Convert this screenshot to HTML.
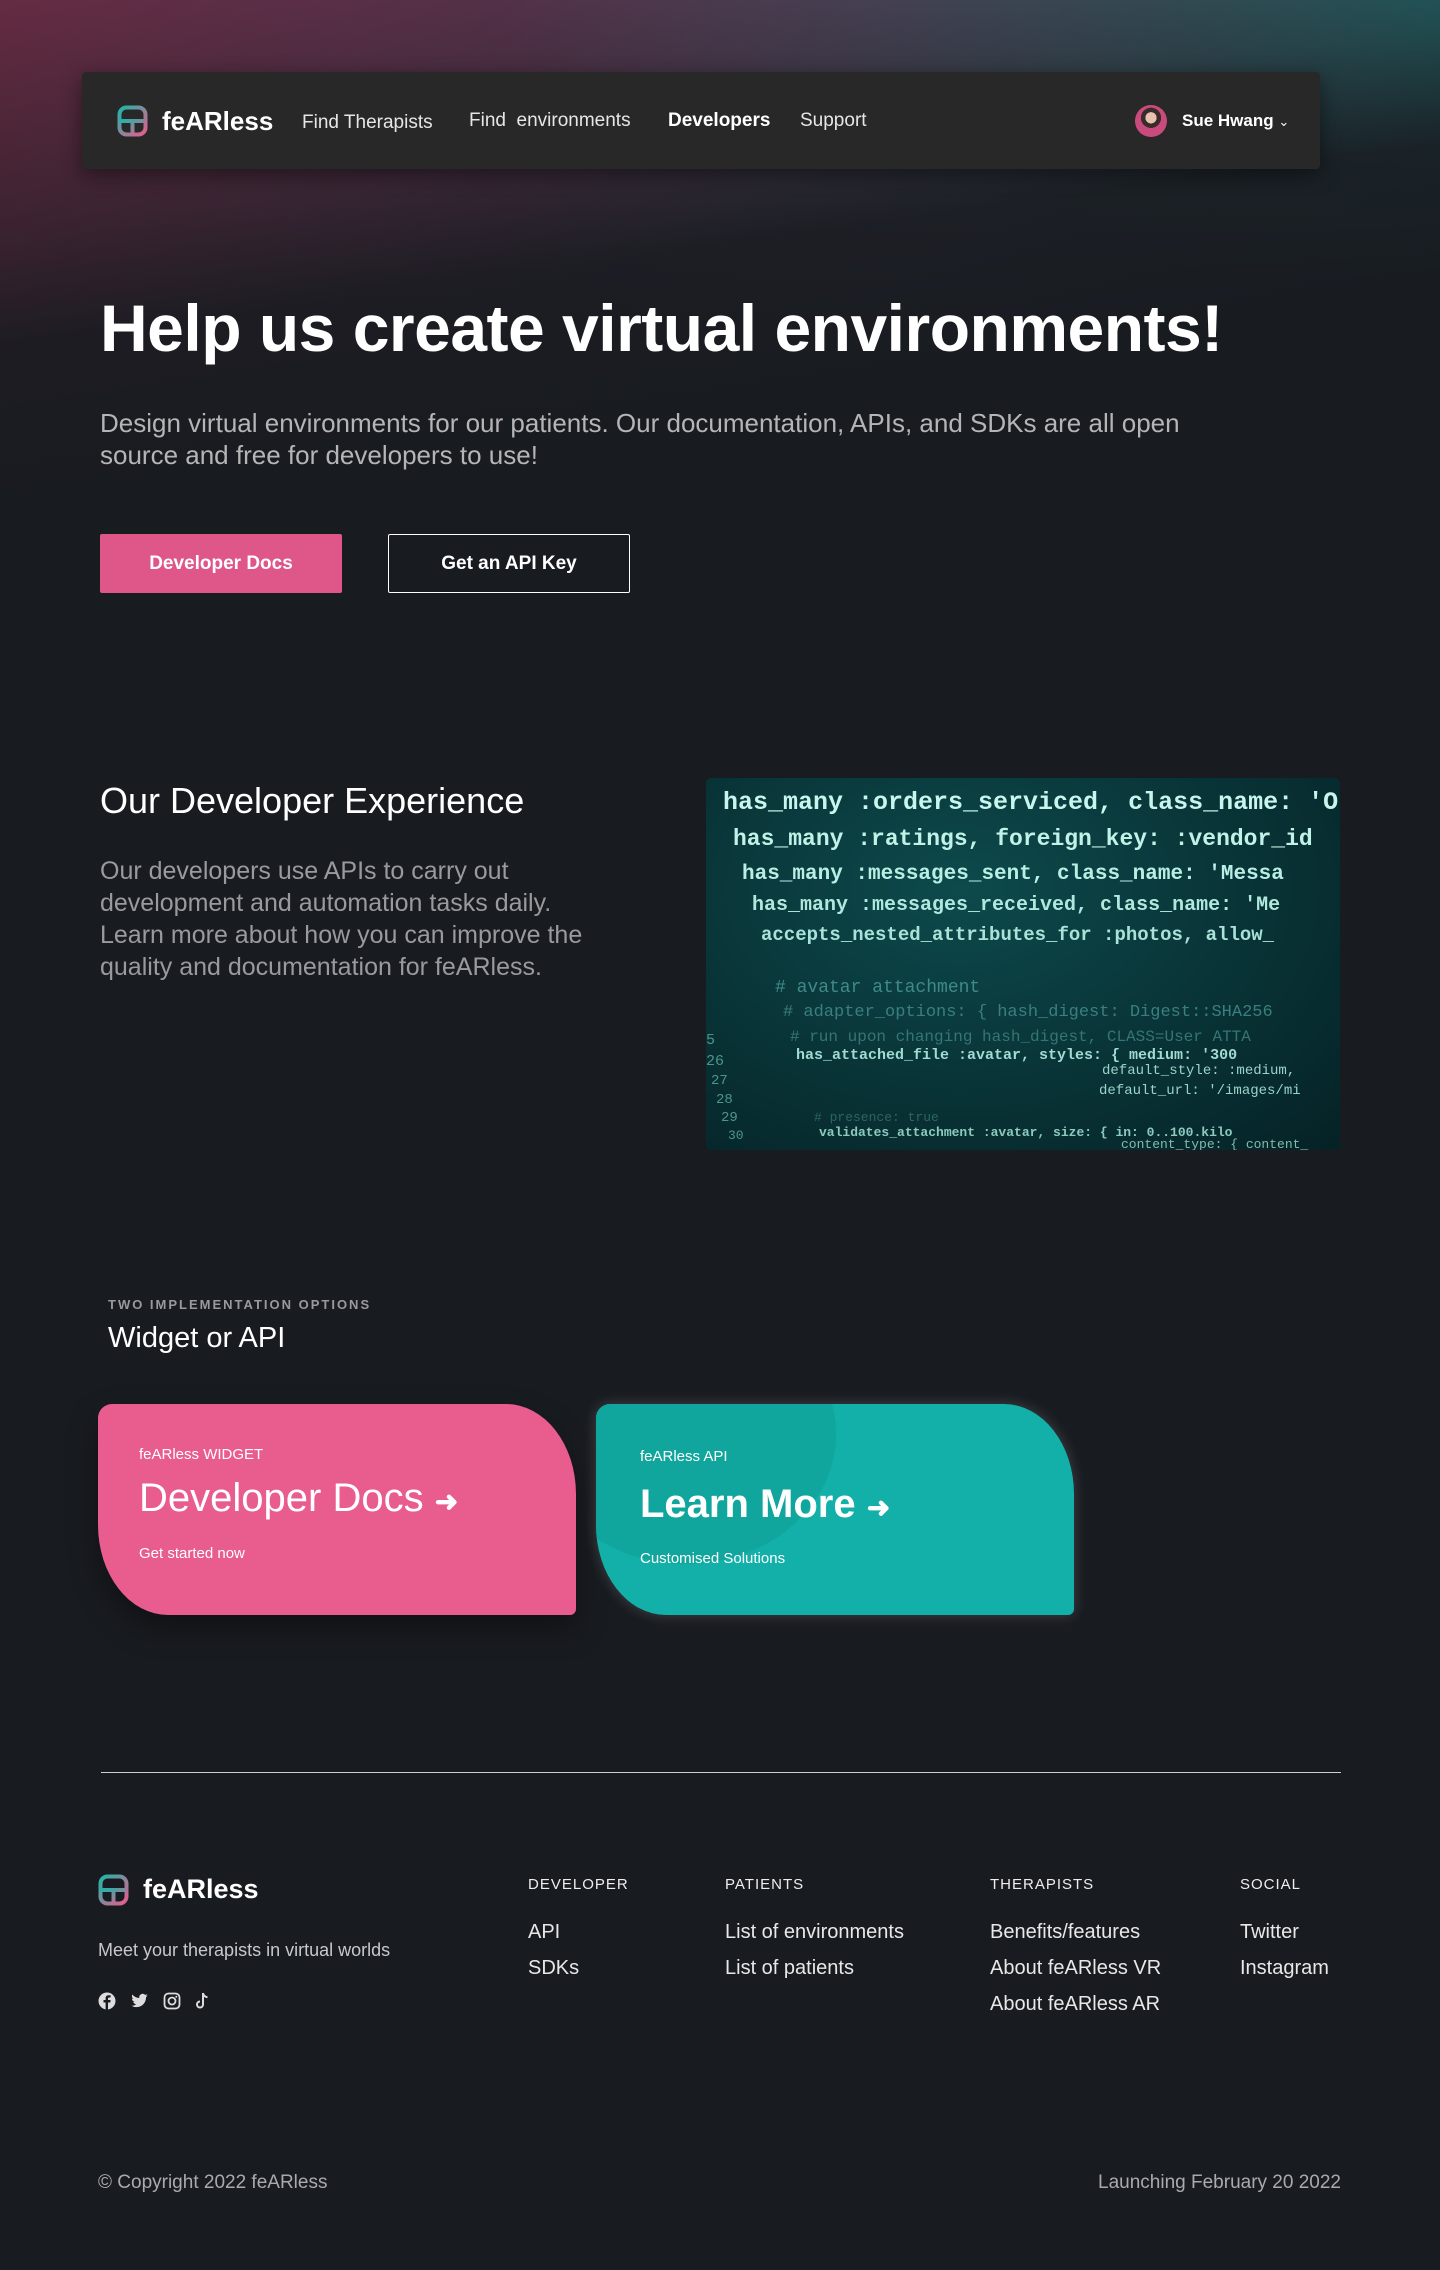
<!DOCTYPE html>
<html><head><meta charset="utf-8"><style>
*{margin:0;padding:0;box-sizing:border-box}
body{width:1440px;height:2270px;background:#181b20;font-family:"Liberation Sans",sans-serif;color:#fff;position:relative;overflow:hidden}
.abs{position:absolute}
.topbg{position:absolute;left:0;top:0;width:1440px;height:520px;
background:linear-gradient(to right,#652b43 0%,#5f3550 35%,#565066 62%,#3f6a74 85%,#2a8486 100%);}
.topbg:after{content:"";position:absolute;inset:0;background:linear-gradient(172deg,rgba(24,27,32,0) 0%,rgba(24,27,32,.55) 32%,rgba(24,27,32,.93) 48%,#181b20 70%)}
.nav{left:82px;top:72px;width:1238px;height:97px;background:#282828;border-radius:4px;box-shadow:0 6px 20px rgba(0,0,0,.45)}
.nav a{position:absolute;top:40px;font-size:19px;color:#e6e6e6;text-decoration:none}
.btn{top:534px;width:242px;height:59px;border-radius:2px;font-size:19px;font-weight:bold;display:flex;align-items:center;justify-content:center}
.code{left:706px;top:778px;width:634px;height:372px;border-radius:5px;overflow:hidden;background:radial-gradient(ellipse at 40% 30%,#0d4a4c 0%,#093538 50%,#052226 100%);font-family:"Liberation Mono","DejaVu Sans Mono",monospace;white-space:nowrap}
.code div{position:absolute;line-height:1}
.card{top:1404px;width:478px;height:211px;border-radius:14px 70px 6px 70px/14px 90px 6px 90px;overflow:hidden}
.card .s{position:absolute;font-size:15px}
.card .b{position:absolute;font-size:40px}
.fh{top:1876px;font-size:15px;letter-spacing:1px;color:#eee}
.fl{font-size:20px;color:#e8e8e8;line-height:36px}
</style></head><body>
<div class="topbg"></div>

<div class="abs nav">
  <svg class="abs" style="left:35px;top:33px" width="31" height="32" viewBox="0 0 31 32"><defs><linearGradient id="lg" x1="0" y1="0" x2="1" y2="1"><stop offset="0" stop-color="#1fb5a9"/><stop offset="1" stop-color="#e85c8e"/></linearGradient></defs><rect x="2.5" y="2.5" width="26" height="27" rx="7" fill="none" stroke="url(#lg)" stroke-width="4"/><path d="M3 16H28M15.5 16V29" stroke="url(#lg)" stroke-width="4" fill="none"/></svg>
  <div class="abs" style="left:80px;top:34px;font-size:26px;font-weight:bold">feARless</div>
  <a style="left:220px">Find Therapists</a>
  <a style="left:387px;top:38px">Find &nbsp;environments</a>
  <a style="left:586px;top:38px;color:#fff;font-weight:bold">Developers</a>
  <a style="left:718px;top:38px">Support</a>
  <div class="abs" style="left:1053px;top:33px;width:32px;height:32px;border-radius:50%;background:radial-gradient(circle at 50% 40%,#e8c0b0 0 22%,#3a2a2a 23% 40%,#c94b7e 41%)"></div>
  <div class="abs" style="left:1100px;top:39px;font-size:17px;font-weight:bold">Sue Hwang <span style="font-weight:normal;font-size:13px">&#8964;</span></div>
</div>

<div class="abs" style="left:100px;top:290px;font-size:66px;font-weight:bold;letter-spacing:-0.5px">Help us create virtual environments!</div>
<div class="abs" style="left:100px;top:407px;width:1150px;font-size:26px;line-height:32px;color:#b5b5b8">Design virtual environments for our patients. Our documentation, APIs, and SDKs are all open source and free for developers to use!</div>
<div class="abs btn" style="left:100px;background:#df5689">Developer Docs</div>
<div class="abs btn" style="left:388px;border:1.5px solid #fff">Get an API Key</div>

<div class="abs" style="left:100px;top:780px;font-size:36px">Our Developer Experience</div>
<div class="abs" style="left:100px;top:855px;width:485px;font-size:25px;line-height:32px;color:#9a9a9e">Our developers use APIs to carry out development and automation tasks daily. Learn more about how you can improve the quality and documentation for feARless.</div>

<div class="abs code">
 <div style="left:17px;top:12px;font-size:25px;font-weight:bold;color:#c8f6ee">has_many :orders_serviced, class_name: 'O</div>
 <div style="left:27px;top:50px;font-size:23px;font-weight:bold;color:#c0f2e8">has_many :ratings, foreign_key: :vendor_id</div>
 <div style="left:36px;top:86px;font-size:21px;font-weight:bold;color:#b8eee4">has_many :messages_sent, class_name: 'Messa</div>
 <div style="left:46px;top:118px;font-size:20px;font-weight:bold;color:#b0e8de">has_many :messages_received, class_name: 'Me</div>
 <div style="left:55px;top:148px;font-size:19px;font-weight:bold;color:#a8e2d8">accepts_nested_attributes_for :photos, allow_</div>
 <div style="left:69px;top:201px;font-size:18px;color:#3f8a88">#&nbsp;avatar attachment</div>
 <div style="left:77px;top:226px;font-size:17px;color:#3a7f7f"># adapter_options: { hash_digest: Digest::SHA256</div>
 <div style="left:84px;top:251px;font-size:16px;color:#357575"># run upon changing hash_digest, CLASS=User ATTA</div>
 <div style="left:90px;top:270px;font-size:15px;font-weight:bold;color:#a0dcd2">has_attached_file :avatar, styles: { medium: '300</div>
 <div style="left:396px;top:286px;font-size:14px;color:#98d4ca">default_style: :medium,</div>
 <div style="left:393px;top:306px;font-size:14px;color:#98d4ca">default_url: '/images/mi</div>
 <div style="left:108px;top:333px;font-size:13px;color:#2d6464"># presence: true</div>
 <div style="left:113px;top:348px;font-size:13px;font-weight:bold;color:#8ccac0">validates_attachment :avatar, size: { in: 0..100.kilo</div>
 <div style="left:415px;top:360px;font-size:13px;color:#80bcb2">content_type: { content_</div>
 <div style="left:0;top:255px;font-size:15px;color:#4c9490">5</div>
 <div style="left:0;top:276px;font-size:15px;color:#4c9490">26</div>
 <div style="left:5px;top:296px;font-size:14px;color:#4c9490">27</div>
 <div style="left:10px;top:315px;font-size:14px;color:#4c9490">28</div>
 <div style="left:15px;top:333px;font-size:14px;color:#4c9490">29</div>
 <div style="left:22px;top:351px;font-size:13px;color:#4c9490">30</div>
</div>

<div class="abs" style="left:108px;top:1297px;font-size:13px;font-weight:bold;letter-spacing:2px;color:#9a9a9e">TWO IMPLEMENTATION OPTIONS</div>
<div class="abs" style="left:108px;top:1322px;font-size:29px">Widget or API</div>

<div class="abs card" style="left:98px;background:#e85c8e;box-shadow:0 14px 30px rgba(0,0,0,.35)">
  <div class="s" style="left:41px;top:42px">feARless WIDGET</div>
  <div class="b" style="left:41px;top:72px">Developer Docs <span style="font-size:28px;font-weight:bold">&#10140;</span></div>
  <div class="s" style="left:41px;top:141px">Get started now</div>
</div>
<div class="abs card" style="left:596px;background:#12b0a8;box-shadow:0 0 14px rgba(255,255,255,.18)">
  <div class="abs" style="left:-60px;top:-100px;width:300px;height:260px;border-radius:50%;background:#0fa398;opacity:.7"></div>
  <div class="s" style="left:44px;top:44px">feARless API</div>
  <div class="b" style="left:44px;top:78px;font-weight:bold">Learn More <span style="font-size:28px">&#10140;</span></div>
  <div class="s" style="left:44px;top:146px">Customised Solutions</div>
</div>

<div class="abs" style="left:101px;top:1772px;width:1240px;height:1px;background:#cfcfcf"></div>

<svg class="abs" style="left:98px;top:1874px" width="31" height="32" viewBox="0 0 31 32"><defs><linearGradient id="lg2" x1="0" y1="0" x2="1" y2="1"><stop offset="0" stop-color="#1fb5a9"/><stop offset="1" stop-color="#e85c8e"/></linearGradient></defs><rect x="2.5" y="2.5" width="26" height="27" rx="7" fill="none" stroke="url(#lg2)" stroke-width="4"/><path d="M3 16H28M15.5 16V29" stroke="url(#lg2)" stroke-width="4" fill="none"/></svg>
<div class="abs" style="left:143px;top:1874px;font-size:27px;font-weight:bold">feARless</div>
<div class="abs" style="left:98px;top:1940px;font-size:18px;color:#c8c8cc">Meet your therapists in virtual worlds</div>
<div class="abs" style="left:98px;top:1992px;display:flex;gap:14px;color:#ddd">
 <svg width="18" height="18" viewBox="0 0 18 18"><circle cx="9" cy="9" r="8.5" fill="#ddd"/><path d="M10 18V10.5h2.3l.3-2.5H10V6.6c0-.7.3-1.1 1.2-1.1h1.4V3.3c-.3 0-1-.1-1.9-.1-2 0-3.1 1.1-3.1 3.2V8H5.5v2.5h2.1V18z" fill="#181b20"/></svg>
 <svg width="19" height="18" viewBox="0 0 24 24"><path fill="#ddd" d="M23 4.6c-.8.4-1.700.6-2.6.7.9-.6 1.6-1.4 2-2.5-.9.5-1.9.9-2.9 1.1a4.5 4.5 0 0 0-7.7 4.1C8 7.8 4.7 6 2.5 3.3a4.5 4.5 0 0 0 1.4 6c-.7 0-1.4-.2-2-.6 0 2.2 1.6 4 3.6 4.4-.7.2-1.4.2-2 .1.6 1.8 2.2 3.1 4.2 3.1A9 9 0 0 1 1 18.2 12.8 12.8 0 0 0 7.9 20.2c8.3 0 12.8-6.9 12.8-12.8v-.6c.9-.6 1.7-1.4 2.3-2.2z"/></svg>
 <svg width="18" height="18" viewBox="0 0 18 18"><rect x="1.5" y="1.5" width="15" height="15" rx="4" fill="none" stroke="#ddd" stroke-width="1.8"/><circle cx="9" cy="9" r="3.5" fill="none" stroke="#ddd" stroke-width="1.8"/><circle cx="13.3" cy="4.7" r="1" fill="#ddd"/></svg>
 <svg width="16" height="18" viewBox="0 0 16 18"><path d="M8 1v11.5a3 3 0 1 1-3-3M8 1c.3 2.5 2 4 4.5 4.2" fill="none" stroke="#ddd" stroke-width="2"/></svg>
</div>

<div class="abs fh" style="left:528px">DEVELOPER</div>
<div class="abs fh" style="left:725px">PATIENTS</div>
<div class="abs fh" style="left:990px">THERAPISTS</div>
<div class="abs fh" style="left:1240px">SOCIAL</div>
<div class="abs fl" style="left:528px;top:1914px">API<br>SDKs</div>
<div class="abs fl" style="left:725px;top:1914px">List of environments<br>List of patients</div>
<div class="abs fl" style="left:990px;top:1914px">Benefits/features<br>About feARless VR<br>About feARless AR</div>
<div class="abs fl" style="left:1240px;top:1914px">Twitter<br>Instagram</div>

<div class="abs" style="left:98px;top:2172px;font-size:19px;color:#aaaaae">© Copyright 2022 feARless</div>
<div class="abs" style="right:99px;top:2172px;font-size:19px;color:#aaaaae">Launching February 20 2022</div>
</body></html>
